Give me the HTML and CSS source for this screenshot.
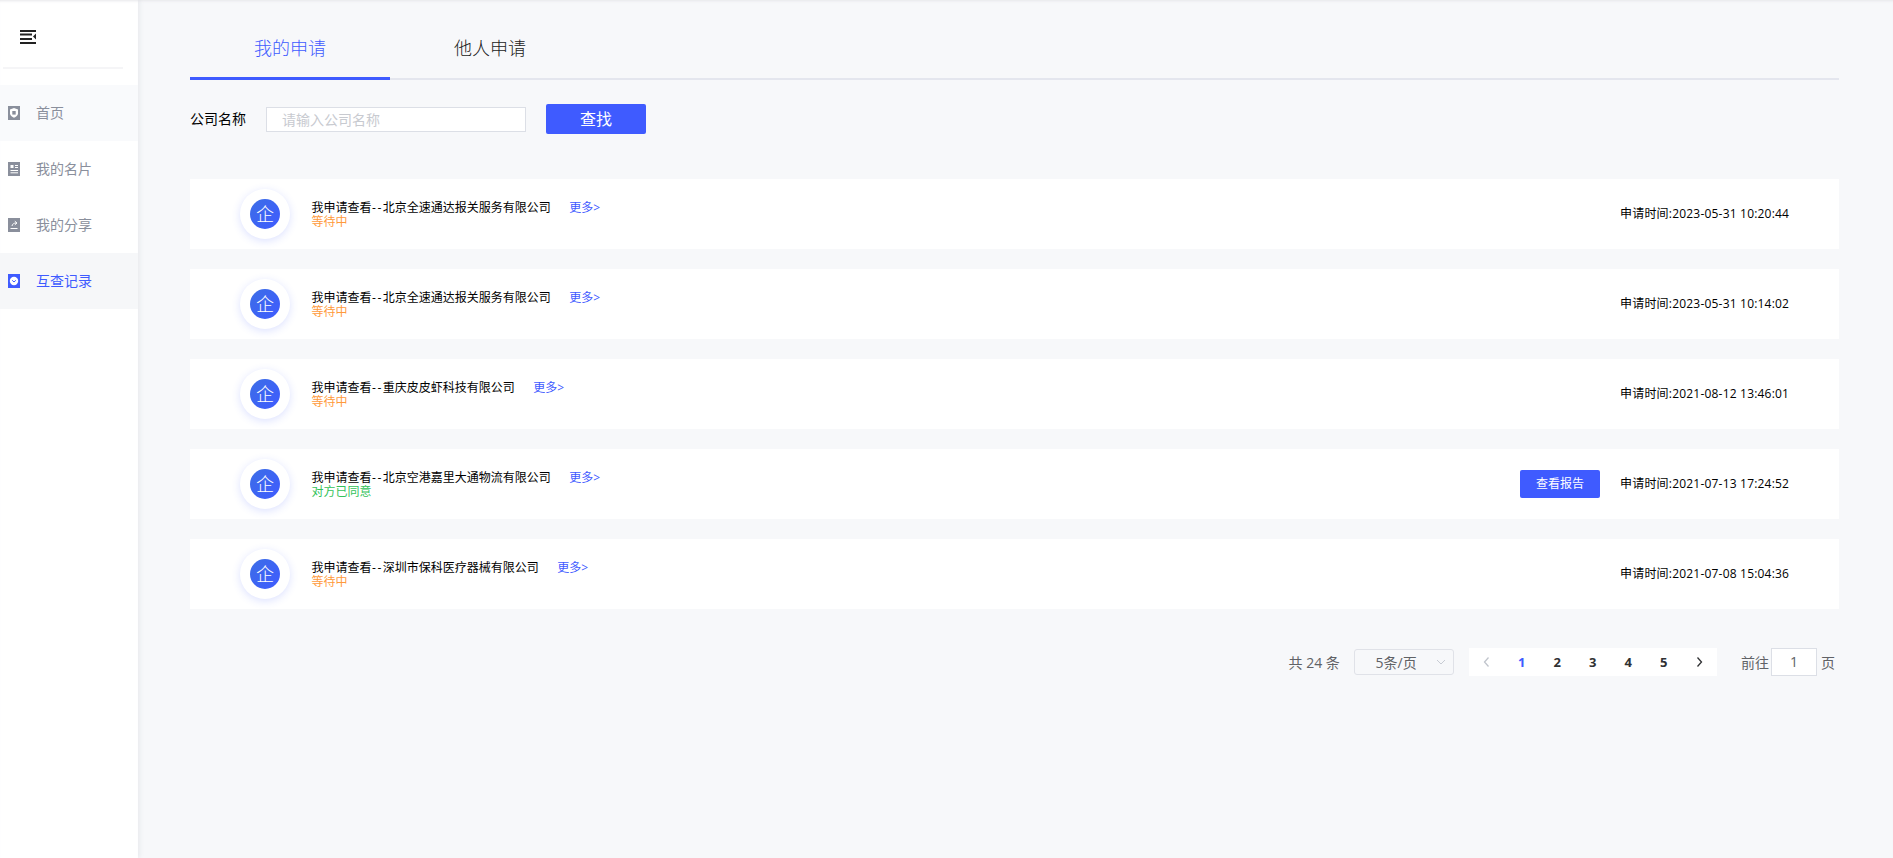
FILE: index.html
```html
<!DOCTYPE html>
<html>
  <head>
    <meta charset="utf-8">
    <title>互查记录</title>
    <link rel="stylesheet" href="styles.css">
  </head>
  <body>
    <div class="container">
      <div class="sidebar">
        <div class="sidebar_top">
          <svg class="fold_icon" width="16" height="14" viewBox="0 0 16 14">
            <path d="M0 1h16M0 4.500h12M0 9h12M0 13h16" stroke="#222" stroke-width="2" fill="none"/>
            <path d="M16 3.500v6l-3-3z" fill="#222"/>
          </svg>
        </div>
        <div class="menu">
          <div class="menu_item hover">
            <svg class="menu_icon" viewBox="0 0 12 14"><rect width="12" height="14" fill="#8a8f9c"/><path d="M6 2l4 1.500v4c0 2-2 3.200-4 4.300-2-1.100-4-2.300-4-4.300v-4z" fill="#fff"/><rect x="4.300" y="5" width="3.400" height="3.600" fill="#8a8f9c"/></svg>
            <span>首页</span>
          </div>
          <div class="menu_item">
            <svg class="menu_icon" viewBox="0 0 12 14"><rect width="12" height="14" fill="#8a8f9c"/><path d="M2.500 3h3v3h-3z" fill="#fff"/><path d="M7 3.500h3M7 5.500h3M2.500 8.500h7.500M2.500 10.800h7.500" stroke="#fff"/></svg>
            <span>我的名片</span>
          </div>
          <div class="menu_item">
            <svg class="menu_icon" viewBox="0 0 12 14"><rect width="12" height="14" fill="#8a8f9c"/><path d="M2.500 10.500h7M4 8c.3-2 2-3 4-3M6.800 3.200L9 5 6.800 6.800" stroke="#fff" fill="none"/></svg>
            <span>我的分享</span>
          </div>
          <div class="menu_item active">
            <svg class="menu_icon" viewBox="0 0 12 14"><rect width="12" height="14" fill="#3f5bff"/><circle cx="6" cy="7" r="4.200" fill="#fff"/><path d="M4.200 6.300L6 8l1.800-1.700" stroke="#3f5bff" fill="none"/></svg>
            <span>互查记录</span>
          </div>
        </div>
      </div>

      <div class="main">
        <div class="tabs">
          <div class="tab tab_active">我的申请</div>
          <div class="tab">他人申请</div>
        </div>

        <div class="search">
          <span class="search_label">公司名称</span>
          <div class="search_input">请输入公司名称</div>
          <div class="search_btn">查找</div>
        </div>

        <div class="list">
          <div class="row">
            <div class="avatar"><div class="avatar_inner">企</div></div>
            <div class="info">
              <div class="info_title"><span>我申请查看<span class="dash">--</span>北京全速通达报关服务有限公司</span><span class="more">更多&gt;</span></div>
              <div class="status wait">等待中</div>
            </div>
            <div class="time">申请时间:2023-05-31 10:20:44</div>
          </div>
          <div class="row">
            <div class="avatar"><div class="avatar_inner">企</div></div>
            <div class="info">
              <div class="info_title"><span>我申请查看<span class="dash">--</span>北京全速通达报关服务有限公司</span><span class="more">更多&gt;</span></div>
              <div class="status wait">等待中</div>
            </div>
            <div class="time">申请时间:2023-05-31 10:14:02</div>
          </div>
          <div class="row">
            <div class="avatar"><div class="avatar_inner">企</div></div>
            <div class="info">
              <div class="info_title"><span>我申请查看<span class="dash">--</span>重庆皮皮虾科技有限公司</span><span class="more">更多&gt;</span></div>
              <div class="status wait">等待中</div>
            </div>
            <div class="time">申请时间:2021-08-12 13:46:01</div>
          </div>
          <div class="row">
            <div class="avatar"><div class="avatar_inner">企</div></div>
            <div class="info">
              <div class="info_title"><span>我申请查看<span class="dash">--</span>北京空港嘉里大通物流有限公司</span><span class="more">更多&gt;</span></div>
              <div class="status ok">对方已同意</div>
            </div>
            <div class="report_btn">查看报告</div>
            <div class="time">申请时间:2021-07-13 17:24:52</div>
          </div>
          <div class="row">
            <div class="avatar"><div class="avatar_inner">企</div></div>
            <div class="info">
              <div class="info_title"><span>我申请查看<span class="dash">--</span>深圳市保科医疗器械有限公司</span><span class="more">更多&gt;</span></div>
              <div class="status wait">等待中</div>
            </div>
            <div class="time">申请时间:2021-07-08 15:04:36</div>
          </div>
        </div>

        <div class="pager">
          <span class="pager_total">共 24 条</span>
          <div class="pager_size">
            <span>5条/页</span>
            <svg width="10" height="6" viewBox="0 0 10 6"><path d="M1 1l4 4 4-4" stroke="#c8ccd4" fill="none"/></svg>
          </div>
          <div class="pager_nums">
            <span class="num"><svg width="7" height="10" viewBox="0 0 7 10"><path d="M5.500 .5L1.500 5l4 4.500" stroke="#c0c4cc" stroke-width="1.300" fill="none"/></svg></span>
            <span class="num num_on">1</span>
            <span class="num">2</span>
            <span class="num">3</span>
            <span class="num">4</span>
            <span class="num">5</span>
            <span class="num"><svg width="7" height="10" viewBox="0 0 7 10"><path d="M1.500 .5L5.500 5l-4 4.500" stroke="#303133" stroke-width="1.300" fill="none"/></svg></span>
          </div>
          <div class="pager_jump">
            <span>前往</span>
            <div class="jump_input">1</div>
            <span>页</span>
          </div>
        </div>
      </div>
    </div>
  </body>
</html>
```

FILE: styles.css
```css
* {
  margin: 0;
  padding: 0;
  box-sizing: border-box;
}

body {
  background-color: #f7f8fa;
  font-family: "Open Sans", "Noto Sans CJK SC", sans-serif;
  font-size: 12px;
  color: #000;
}

.container {
  display: flex;
  height: 858px;
  overflow: hidden;
  box-shadow: inset 0 3px 3px -2px #e6e6ea;
}

/* left menu */
.sidebar {
  width: 138px;
  flex-shrink: 0;
  background-color: #fff;
  box-shadow: 2px 0 4px rgba(120, 125, 140, 0.1), inset 0 3px 3px -2px #e6e6ea;
}

.sidebar_top {
  height: 69px;
  margin: 0 15px 16px 3px;
  padding: 30px 0 0 17px;
  border-bottom: 2px solid #f5f5f7;
}

.fold_icon {
  display: block;
}

.menu_item {
  display: flex;
  align-items: center;
  height: 56px;
  padding: 0 0 2px 8px;
  font-size: 14px;
  color: #8a8f9c;
}

.menu_item.hover {
  background-color: #f9fafc;
}

.menu_item.active {
  background-color: #f6f7f9;
  color: #3f5bff;
}

.menu_icon {
  width: 12px;
  height: 14px;
  margin: 2px 16px 0 0;
}

/* content */
.main {
  flex: 1;
  padding: 0 54px 0 52px;
}

.tabs {
  display: flex;
  height: 80px;
  border-bottom: 2px solid #e4e6ee;
}

.tab {
  width: 200px;
  height: 80px;
  padding-top: 33px;
  line-height: 30px;
  text-align: center;
  font-size: 18px;
  font-weight: 300;
  color: #222;
}

.tab_active {
  color: #3f5bff;
  border-bottom: 3px solid #3f5bff;
}

.search {
  display: flex;
  align-items: center;
  height: 30px;
  margin-top: 24px;
}

.search_label {
  width: 76px;
  padding-bottom: 2px;
  font-size: 14px;
}

.search_input {
  width: 260px;
  height: 25px;
  margin-top: 1px;
  padding-left: 15px;
  line-height: 23px;
  background-color: #fff;
  border: 1px solid #dcdfe6;
  font-size: 14px;
  color: #c8cad0;
}

.search_btn {
  width: 100px;
  height: 30px;
  margin-left: 20px;
  line-height: 30px;
  text-align: center;
  font-size: 16px;
  color: #fff;
  background-color: #3f5bff;
  border-radius: 2px;
}

.list {
  margin-top: 45px;
}

.row {
  display: flex;
  align-items: center;
  height: 70px;
  margin-bottom: 20px;
  padding: 0 50px 0 50px;
  background-color: #fff;
}

.avatar {
  display: flex;
  align-items: center;
  justify-content: center;
  width: 50px;
  height: 50px;
  background-color: #fff;
  border-radius: 50%;
  box-shadow: 0 2px 8px rgba(63, 91, 255, 0.18);
}

.avatar_inner {
  width: 30px;
  height: 30px;
  line-height: 30px;
  text-align: center;
  font-size: 18px;
  font-weight: 300;
  color: #fff;
  background: linear-gradient(135deg, #3c6ee6, #3f5bff);
  border-radius: 50%;
}

.info {
  flex: 1;
  margin: 2px 0 0 21.5px;
  line-height: 14px;
}

.dash {
  padding-left: 0.5px;
  letter-spacing: 1.5px;
}

.more {
  margin-left: 18.5px;
  color: #3f5bff;
}

.wait {
  color: #ff9a3c;
}

.ok {
  color: #33c25a;
}

.report_btn {
  width: 80px;
  height: 28px;
  margin-right: 20px;
  line-height: 28px;
  text-align: center;
  color: #fff;
  background-color: #3f5bff;
  border-radius: 2px;
}

.time {
  width: 169px;
  padding-bottom: 2px;
  white-space: nowrap;
  letter-spacing: 0.2px;
}

/* pagination */
.pager {
  display: flex;
  align-items: center;
  justify-content: flex-end;
  height: 28px;
  margin-top: 39px;
  padding-right: 4px;
  font-size: 14px;
  color: #606266;
}

.pager_total {
  width: 65px;
}

.pager_size {
  display: flex;
  align-items: center;
  justify-content: space-between;
  width: 100px;
  height: 26px;
  padding: 0 7px 0 21px;
  border: 1px solid #e0e2e8;
  border-radius: 3px;
}

.pager_nums {
  display: flex;
  align-items: center;
  height: 28px;
  margin-left: 15px;
  background-color: #fff;
  font-size: 13px;
  font-weight: 700;
  color: #303133;
}

.num {
  display: flex;
  justify-content: center;
  align-items: center;
  width: 35.5px;
}

.num_on {
  color: #3f5bff;
}

.pager_jump {
  display: flex;
  align-items: center;
  margin-left: 24px;
}

.jump_input {
  width: 46px;
  height: 28px;
  margin: 0 4px 0 2px;
  line-height: 26px;
  text-align: center;
  background-color: #fff;
  border: 1px solid #dcdfe6;
}
```
